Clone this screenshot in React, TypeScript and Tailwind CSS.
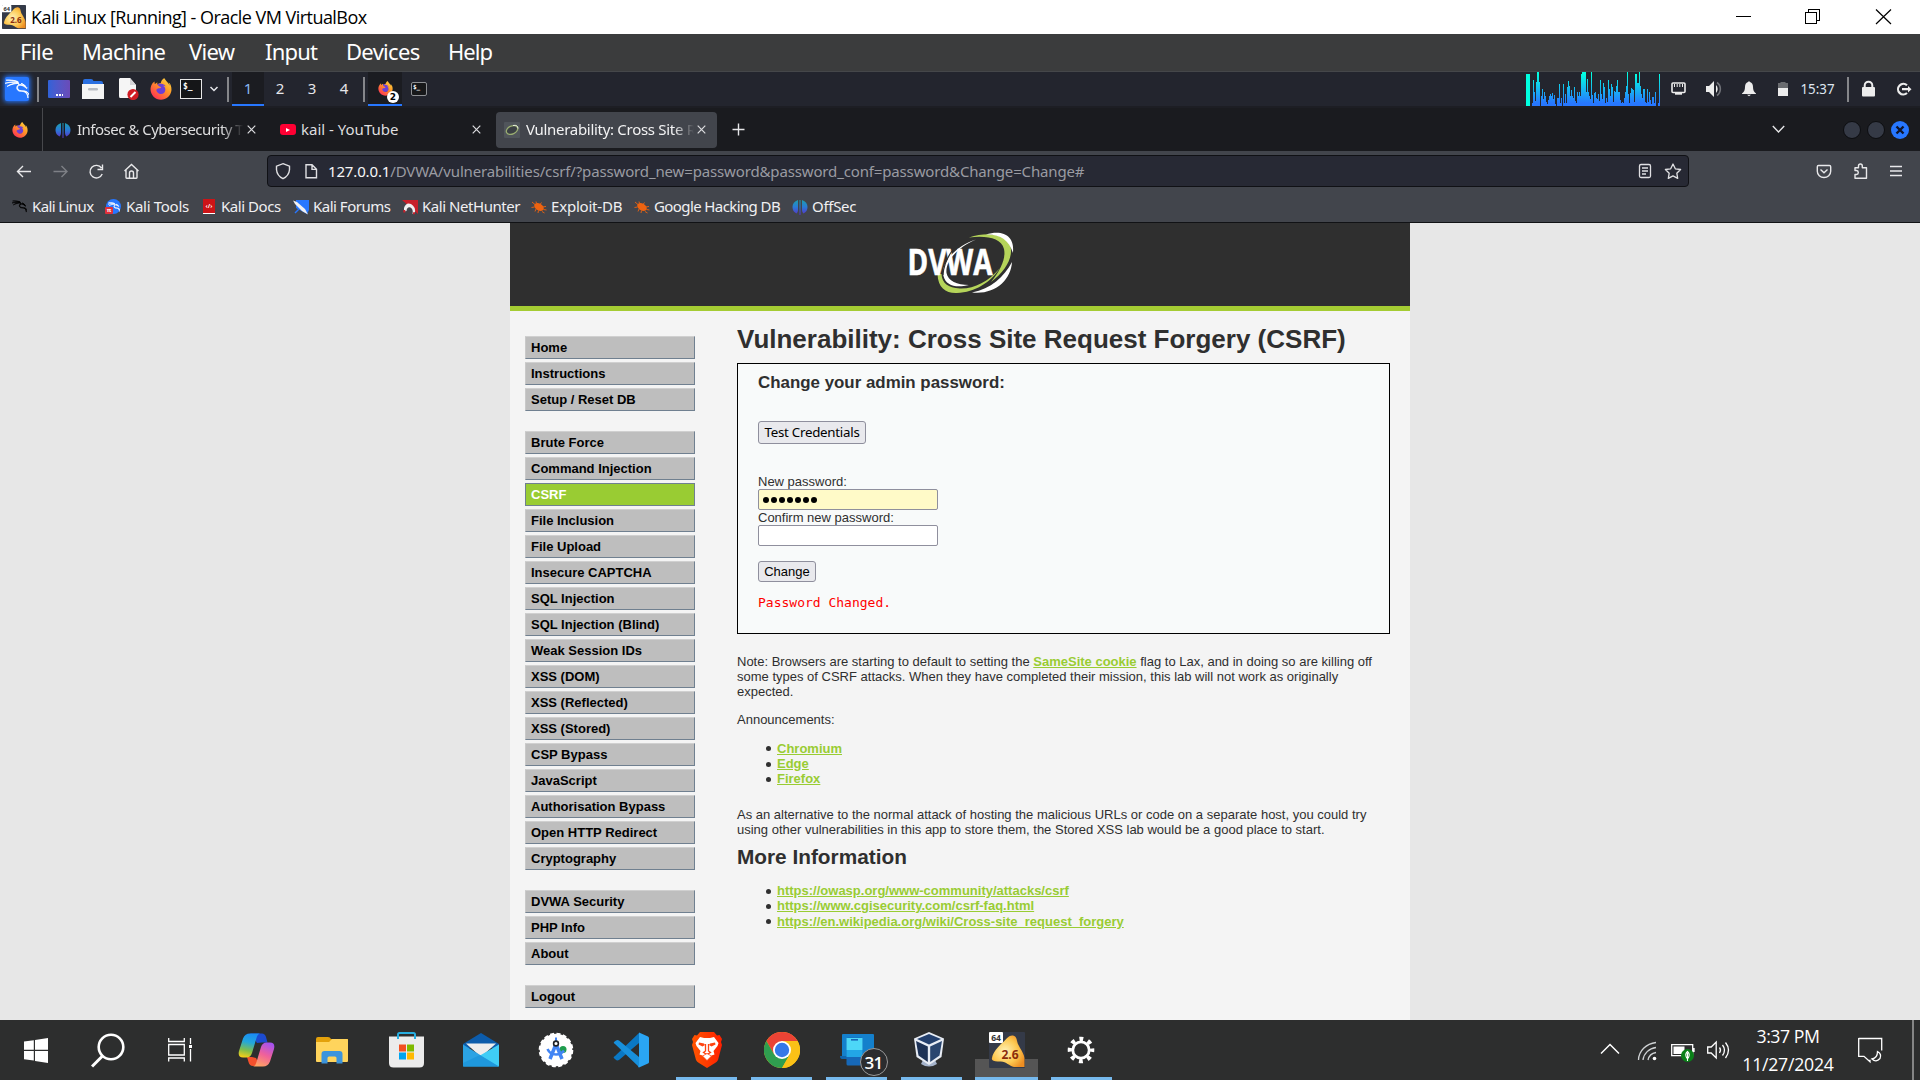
import React from 'react';
import { SiKalilinux } from 'react-icons/si';
import { FaFirefoxBrowser } from 'react-icons/fa';

const CPU = [3,26,14,5,24,34,34,24,0,10,17,7,14,10,4,2,6,10,12,10,13,7,11,2,0,8,8,22,3,8,0,22,3,12,3,19,25,20,10,16,10,8,19,5,3,14,10,14,10,32,34,34,34,34,14,27,14,10,7,34,11,3,13,14,8,7,12,5,26,12,7,23,19,3,8,4,26,17,10,22,19,4,15,14,20,26,14,14,6,3,4,3,8,14,20,34,12,3,13,18,17,16,4,32,32,23,23,34,20,12,8,17,17,4,3,17,4,14,6,2,9,9,3,14,0,0,3,32];

const UI = "font-['Noto_Sans',sans-serif]";
const SEGOE = "font-['Open_Sans','Noto_Sans',sans-serif]";

function Defs() {
  return (
    <svg className="absolute h-0 w-0" aria-hidden="true">
      <defs>
        <linearGradient id="ff" x1="1" y1="0" x2="0.2" y2="1">
          <stop offset="0" stopColor="#ffe14a" />
          <stop offset="0.45" stopColor="#ff9a26" />
          <stop offset="1" stopColor="#ff2d55" />
        </linearGradient>
      </defs>
    </svg>
  );
}

function Firefox({ className }: { className: string }) {
  return (
    <span className={`relative block shrink-0 ${className}`}>
      <span className="absolute inset-[22%] rounded-full bg-[#6b3fd6]" />
      <FaFirefoxBrowser className="relative block h-full w-full" fill="url(#ff)" />
    </span>
  );
}

function VmIcon({ className }: { className: string }) {
  return (
    <svg className={`block shrink-0 ${className}`} viewBox="0 0 36 36">
      <defs>
        <radialGradient id="gold" cx="0.4" cy="0.5" r="0.65">
          <stop offset="0" stopColor="#fff2b8" />
          <stop offset="0.6" stopColor="#fdc850" />
          <stop offset="1" stopColor="#ee8e22" />
        </radialGradient>
      </defs>
      <rect width="36" height="36" rx="1" fill="#343a48" />
      <path d="M3 26C4 20 9 15 13 11C17 8 19 3 24 3.500C29 4.500 27 10 30 14C32 18 36 23 35.500 28V35H25C20 34 17 29 11 29.500C6 30 2 29 3 26Z" fill="url(#gold)" />
      <rect width="14" height="11" rx="1" fill="#fff" />
      <text x="7" y="8.800" fontSize="8.500" fontWeight="700" textAnchor="middle" fill="#333" fontFamily="Open Sans, sans-serif">64</text>
      <text x="21" y="27" fontSize="12" fontWeight="700" textAnchor="middle" fill="#8a2b0c" fontFamily="Open Sans, sans-serif" textLength="17">2.6</text>
    </svg>
  );
}

function TitleBar() {
  return (
    <div className={`flex h-[34px] shrink-0 items-center bg-white pl-[2px] text-black ${SEGOE}`}>
      <VmIcon className="h-6 w-6" />
      <span className="ml-[5px] whitespace-nowrap text-[18px] leading-[34px] tracking-[-0.54px]">Kali Linux [Running] - Oracle VM VirtualBox</span>
      <svg className="ml-auto h-[34px] w-[200px] shrink-0" viewBox="1720 0 200 34" fill="none" stroke="#000" shapeRendering="crispEdges">
        <path d="M1736 16.500h15" />
        <path d="M1805.500 12.500h11v11h-11zM1808.500 12v-2.500h11v11h-3" />
        <path d="M1876 9.500l15 14.500M1891 9.500l-15 14.500" shapeRendering="auto" strokeWidth="1.200" />
      </svg>
    </div>
  );
}

function MenuBar() {
  return (
    <div className={`flex h-[38px] shrink-0 items-center border-b border-[#45474a] bg-[#3b3c3d] pb-[3px] pl-[20px] text-[22px] leading-none text-white ${UI}`}>
      <span className="w-[62px] tracking-[-0.5px]">File</span>
      <span className="w-[107px] tracking-[-0.7px]">Machine</span>
      <span className="w-[76px] tracking-[-0.7px]">View</span>
      <span className="w-[81px] tracking-[-0.8px]">Input</span>
      <span className="w-[102px] tracking-[-0.7px]">Devices</span>
      <span className="tracking-[-1px]">Help</span>
    </div>
  );
}

function PanelSep({ className }: { className: string }) {
  return <span className={`h-[25px] w-[2px] shrink-0 bg-[#85868a] ${className}`} />;
}

function KaliPanel() {
  return (
    <div className={`flex h-[34px] shrink-0 items-center bg-[#23252e] text-[15px] text-[#e6e6ea] ${UI}`}>
      <span className="ml-[5px] flex h-6 w-6 shrink-0 items-center justify-center rounded-[2px] bg-[#2777ff] shadow-[0_0_5px_1px_#2777ff]">
        <SiKalilinux className="h-6 w-6 text-white" stroke="currentColor" strokeWidth={0.8} />
      </span>
      <PanelSep className="ml-[8px]" />
      <span className="ml-[9px] flex h-[18px] w-[22px] shrink-0 items-end justify-center rounded-[1px] bg-gradient-to-r from-[#2f62d8] to-[#6a4bb8] pb-[2px]">
        <span className="h-[2px] w-[7px] bg-[repeating-linear-gradient(90deg,#fff_0_2px,transparent_2px_3px)]" />
      </span>
      <svg className="ml-3 h-[20px] w-[22px] shrink-0" viewBox="0 0 22 20">
        <path d="M1 8V2Q1 0 3 0H9Q11 0 11.500 2H19Q21 2 21 4V8Z" fill="#2a6fe0" />
        <path d="M0 5H22V20H0Z" fill="#f4f4f4" />
        <rect x="6" y="9" width="10" height="2.500" rx="1.200" fill="#b9bcc2" />
      </svg>
      <svg className="ml-[14px] h-[22px] w-[21px] shrink-0" viewBox="0 0 21 22">
        <path d="M2 0H12L18 7V20H2Q1 20 1 18V1Z" fill="#f5f5f5" />
        <path d="M12 0V7H18Z" fill="#d5d5d8" />
        <circle cx="15" cy="16.500" r="5.600" fill="#d01c24" />
        <path d="M12.500 19L17.500 14" stroke="#fff" strokeWidth="2" />
      </svg>
      <Firefox className="ml-[11px] h-[22px] w-[22px]" />
      <span className="ml-[8px] h-[20px] w-[22px] shrink-0 border border-[#e8e8e8] bg-[#151618] pl-[2px] font-['DejaVu_Sans_Mono',monospace] text-[8px] font-bold leading-[14px] text-white">$_</span>
      <svg className="ml-[7px] h-2 w-[10px] shrink-0" viewBox="0 0 10 8" fill="none" stroke="#e6e6ea" strokeWidth="1.500"><path d="M1.500 2l3.500 3.500L8.500 2" /></svg>
      <PanelSep className="ml-[8px]" />
      <span className="ml-[3px] flex h-[34px] w-8 shrink-0 items-center justify-center border-b-2 border-[#2777ff] bg-[#1b1c21] text-[#8ab8ee]">1</span>
      <span className="w-8 shrink-0 pb-[2px] text-center">2</span>
      <span className="w-8 shrink-0 pb-[2px] text-center">3</span>
      <span className="w-8 shrink-0 pb-[2px] text-center">4</span>
      <PanelSep className="ml-[3px]" />
      <span className="relative ml-[3px] flex h-[34px] w-[34px] shrink-0 items-center justify-center border-b-2 border-[#2777ff] bg-[#1b1c21]">
        <Firefox className="h-[15px] w-[15px]" />
        <span className="absolute left-[19px] top-[19px] flex h-[12px] w-[12px] items-center justify-center rounded-full bg-white font-['DejaVu_Sans',sans-serif] text-[9px] font-bold leading-none text-black">2</span>
      </span>
      <span className="ml-[9px] h-[14px] w-[16px] shrink-0 rounded-[2px] border border-[#8d8f93] bg-[#17181a] pl-[1px] font-['DejaVu_Sans_Mono',monospace] text-[6px] font-bold leading-[8px] text-white">$_</span>

      <svg className="ml-auto h-[34px] w-[394px] shrink-0" viewBox="1526 72 394 34">
        <defs>
          <linearGradient id="cpu" gradientUnits="userSpaceOnUse" x1="0" x2="0" y1="74" y2="103">
            <stop offset="0" stopColor="#03ffe1" />
            <stop offset="1" stopColor="#2777ff" />
          </linearGradient>
        </defs>
        <rect x="1526" y="74" width="4" height="32" fill="#00ffe0" />
        <g fill="url(#cpu)" shapeRendering="crispEdges">
          {CPU.map((h, i) => <rect key={i} x={1532 + i} y={106 - h} width="1" height={h} />)}
        </g>
        <g fill="none" stroke="#ececec" strokeWidth="1.600">
          <rect x="1672" y="83" width="13" height="9.500" rx="1" />
          <path d="M1675 93.700h7" strokeWidth="2" />
          <path d="M1674.500 84v3M1677.200 84v3M1679.800 84v3M1682.500 84v3" strokeWidth="1" />
        </g>
        <path d="M1706 86h3l5-5v16l-5-5h-3z" fill="#ececec" />
        <path d="M1716 85a5.500 5.500 0 0 1 0 8z" fill="#ececec" />
        <path d="M1717 82.500a8 8 0 0 1 0 13" fill="none" stroke="#707278" strokeWidth="1.600" />
        <path d="M1742 93.500q3-2 3-6.500q0-4 3-5q1-1.500 2 0q3 1 3 5q0 4.500 3 6.500v.5h-14zM1747 94.800h4l-2 1.500z" fill="#ececec" />
        <path d="M1778 83h2.500v-1h5v1h2.500v5h-10z" fill="#6a6c70" />
        <rect x="1778" y="88" width="10" height="8" fill="#ececec" />
        <text x="1800.500" y="94" fontSize="15" fill="#dfe6f0" fontFamily="Noto Sans, sans-serif" textLength="34" lengthAdjust="spacingAndGlyphs">15:37</text>
        <rect x="1847" y="77" width="2" height="25" fill="#85868a" />
        <rect x="1862" y="87" width="13" height="9.500" rx="1" fill="#ececec" />
        <path d="M1864.700 88v-2.500a3.800 3.800 0 0 1 7.600 0V88" fill="none" stroke="#ececec" strokeWidth="2" />
        <path d="M1907 85.300a5.300 5.300 0 1 0 0 7.700M1902 89.200h8" fill="none" stroke="#ececec" strokeWidth="2.200" />
        <path d="M1908 86l3.500 3.200-3.500 3.200z" fill="#ececec" />
      </svg>
    </div>
  );
}

function CloseX({ className }: { className: string }) {
  return (
    <svg className={`h-[9px] w-[9px] shrink-0 ${className}`} viewBox="0 0 9 9" stroke="#dcdcdf" strokeWidth="1.200"><path d="M.7 .7l7.600 7.600M8.300 .7l-7.600 7.600" /></svg>
  );
}

function OffSec({ className }: { className: string }) {
  return (
    <svg className={`h-4 w-4 shrink-0 ${className}`} viewBox="0 0 16 16">
      <defs>
        <linearGradient id="os" gradientUnits="userSpaceOnUse" x1="0" x2="0" y1="0" y2="16">
          <stop offset="0" stopColor="#1aa3a8" />
          <stop offset="0.5" stopColor="#2a7bd6" />
          <stop offset="1" stopColor="#5a2fc8" />
        </linearGradient>
      </defs>
      <path d="M6 1Q.5 3 .5 8Q.5 12.500 4.500 14.500Q6 13 6 11ZM10 1Q15.500 3 15.500 8Q15.500 12.500 11.500 14.500Q10 13 10 11ZM7.500 1h1v15h-1z" fill="url(#os)" />
    </svg>
  );
}

function TabBar() {
  return (
    <div className={`flex h-[43px] shrink-0 items-center bg-[#1a1b1f] text-[15px] text-[#dededf] ${UI}`}>
      <Firefox className="ml-[12px] h-4 w-4" />
      <span className="ml-[14px] h-full w-px shrink-0 bg-[#47484c]" />
      <OffSec className="ml-[12px]" />
      <span className="ml-[6px] w-[168px] shrink-0 overflow-hidden whitespace-nowrap tracking-[-0.5px] [mask-image:linear-gradient(90deg,#000_86%,transparent_99%)]">Infosec &amp; Cybersecurity Training</span>
      <CloseX className="ml-[2px]" />
      <span className="ml-[24px] flex h-[11px] w-4 shrink-0 items-center justify-center rounded-[3px] bg-[#ff0033]">
        <span className="h-0 w-0 border-y-[2.500px] border-l-[4px] border-y-transparent border-l-white" />
      </span>
      <span className="ml-[5px] w-[171px] shrink-0 whitespace-nowrap">kail - YouTube</span>
      <CloseX className="" />
      <div className="ml-[15px] flex h-[36px] w-[221px] shrink-0 items-center rounded-[4px] bg-[#42454c] pl-2 text-[#f2f2f3]">
        <svg className="h-4 w-4 shrink-0" viewBox="0 0 16 16">
          <rect width="16" height="16" rx="1" fill="#50555b" />
          <ellipse cx="8" cy="8" rx="6" ry="4" transform="rotate(-25 8 8)" fill="#3b4044" stroke="#9aae72" strokeWidth="1.300" />
          <path d="M9 3.500q5-1 5 3" stroke="#e8f0dc" fill="none" />
        </svg>
        <span className="ml-[6px] w-[168px] shrink-0 overflow-hidden whitespace-nowrap tracking-[-0.3px] [mask-image:linear-gradient(90deg,#000_88%,transparent_100%)]">Vulnerability: Cross Site Request</span>
        <CloseX className="ml-[3px]" />
      </div>
      <svg className="ml-[15px] h-[13px] w-[13px] shrink-0" viewBox="0 0 13 13" stroke="#e6e6e8" strokeWidth="1.400"><path d="M6.500 .5v12M.5 6.500h12" /></svg>
      <svg className="ml-auto mr-[50px] h-[9px] w-[13px] shrink-0" viewBox="0 0 13 9" fill="none" stroke="#e6e6e8" strokeWidth="1.400"><path d="M.8 1l5.700 6 5.700-6" /></svg>
      <span className="ml-[8px] h-[18px] w-[18px] shrink-0 rounded-full border border-[#0c0d10] bg-[#353a46]" />
      <span className="ml-[6px] h-[18px] w-[18px] shrink-0 rounded-full border border-[#0c0d10] bg-[#353a46]" />
      <svg className="ml-[6px] mr-[11px] h-[18px] w-[18px] shrink-0" viewBox="0 0 18 18"><circle cx="9" cy="9" r="9" fill="#2777ff" /><path d="M5.500 5.500l7 7M12.500 5.500l-7 7" stroke="#10152a" strokeWidth="2.400" /></svg>
    </div>
  );
}

function NavBar() {
  return (
    <div className={`flex h-[40px] shrink-0 items-center bg-[#42454c] text-[15px] ${UI}`}>
      <svg className="h-[40px] w-[267px] shrink-0" viewBox="0 151 267 40" fill="none" stroke="#e8e8ea" strokeWidth="1.400">
        <path d="M31 171.500H17.500M23 166l-5.500 5.500 5.500 5.500" />
        <path d="M53.500 171.500H67M61.500 166l5.500 5.500-5.500 5.500" stroke="#7e8086" />
        <path d="M101.500 168A6.300 6.300 0 1 0 102.200 174M102.500 164.500v5h-5" />
        <path d="M124.500 171l7-6.500 7 6.500M126 170v7.500q0 .7 .7 .7h9.600q.7 0 .7-.7V170M129.500 178v-5q0-2 2-2t2 2v5" />
      </svg>
      <div className="flex h-[32px] w-[1422px] shrink-0 items-center rounded-[4px] border border-[#101115] bg-[#272934]">
        <svg className="h-[30px] w-[52px] shrink-0" viewBox="268 156 52 30" fill="none" stroke="#e0e0e3" strokeWidth="1.400">
          <path d="M283 163.700l6.500 2.500v3.500q-.5 6-6.500 9-6-3-6.500-9v-3.500z" />
          <path d="M306 164.700h6l4.500 4.500v8.500H306zM312 164.700v4.700h4.500" />
        </svg>
        <span className="ml-[8px] whitespace-nowrap tracking-[-0.145px] text-[#9a9ba2]"><span className="text-[#f6f6f8]">127.0.0.1</span>/DVWA/vulnerabilities/csrf/?password_new=password&amp;password_conf=password&amp;Change=Change#</span>
        <svg className="ml-auto h-[30px] w-[58px] shrink-0" viewBox="1630 156 58 30" fill="none" stroke="#e0e0e3" strokeWidth="1.300">
          <rect x="1639.500" y="164.500" width="11" height="13" rx="1.500" />
          <path d="M1642 168h6M1642 171h6M1642 174h4" />
          <path d="M1673 164l2.300 4.800 5.300.7-3.800 3.700.9 5.200-4.700-2.500-4.700 2.500.9-5.200-3.800-3.700 5.300-.7z" strokeLinejoin="round" />
        </svg>
      </div>
      <svg className="ml-auto h-[40px] w-[110px] shrink-0" viewBox="1810 151 110 40" fill="none" stroke="#e8e8ea" strokeWidth="1.400">
        <path d="M1818.500 165.500h11q1.200 0 1.200 1.200v4.500a6.700 6.300 0 0 1-13.400 0v-4.500q0-1.200 1.200-1.200zM1820.500 169.500l3.500 3.300 3.500-3.300" />
        <path d="M1855 178.300v-3.800h1.500q1.800-.2 1.800-2t-1.800-2H1855v-2.700h3.500v-1.800q0-2 1.900-2t1.900 2v1.800h4.200v10.500z" strokeLinejoin="round" />
        <path d="M1890 166.500h12M1890 171h12M1890 175.500h12" />
      </svg>
    </div>
  );
}

function Beetle() {
  return (
    <svg className="h-4 w-4 shrink-0" viewBox="0 0 16 16">
      <ellipse cx="8" cy="8" rx="5.200" ry="3.400" transform="rotate(30 8 8)" fill="#ee6310" />
      <path d="M4 5.500L1 3M5.500 4.500L5 2.500M9 5.500l1.500-2M11.500 8l3.500-.5M3.500 8L.5 8.500M5 10l-1 2.500M7.500 11.500L7 14M11 12.500l2.500 1.500M12.500 10.500l3 .5" stroke="#ee6310" strokeWidth="0.900" fill="none" />
    </svg>
  );
}

function Bookmarks() {
  return (
    <div className={`flex h-[32px] shrink-0 items-center border-b border-[#111215] bg-[#42454c] text-[15px] text-[#f0f0f2] ${UI}`}>
      <div className="ml-[12px] flex w-[94px] shrink-0 items-center gap-[5px] whitespace-nowrap"><SiKalilinux className="h-[15px] w-[15px] shrink-0 text-black" stroke="currentColor" strokeWidth={1} /><span className="tracking-[-0.6px]">Kali Linux</span></div>
      <div className="flex w-[96px] shrink-0 items-center gap-[5px] whitespace-nowrap">
        <span className="relative h-[15px] w-[15px] shrink-0 rounded-full bg-[#2777ff]"><SiKalilinux className="absolute left-[2px] top-[2px] h-3 w-3 text-white" stroke="currentColor" strokeWidth={1} /><span className="absolute -left-px top-[8px] h-[7px] w-[8px] rounded-[1px] bg-[#e0303a] text-center text-[6px] font-bold leading-[7px] text-white">π</span></span>
        <span className="tracking-[-0.3px]">Kali Tools</span>
      </div>
      <div className="flex w-[91px] shrink-0 items-center gap-[6px] whitespace-nowrap">
        <span className="ml-px flex h-[15px] w-[12px] shrink-0 items-center justify-center border-b border-white bg-[#cc1417] text-[6px] font-bold leading-none text-white">‹/›</span>
        <span className="tracking-[-0.45px]">Kali Docs</span>
      </div>
      <div className="flex w-[109px] shrink-0 items-center gap-[4px] whitespace-nowrap">
        <svg className="h-4 w-4 shrink-0" viewBox="0 0 16 16"><path d="M3 1h13v10l-2 4L3 9z" fill="#2777ff" /><path d="M0 1.500L4 3l8 7 3 5.500L9 12 2 5z" fill="#f0f0f2" /><path d="M2 14l4-4" stroke="#2777ff" strokeWidth="1.500" /></svg>
        <span className="tracking-[-0.5px]">Kali Forums</span>
      </div>
      <div className="flex w-[128px] shrink-0 items-center gap-[4px] whitespace-nowrap">
        <svg className="h-4 w-4 shrink-0" viewBox="0 0 16 16"><path d="M0 1h16v14z" fill="#c7202b" /><path d="M2 9q2-6 7-4 5 3 4 9l-2.500 1q1-5-2-6.500Q5 7.500 4.500 12L2 12.500z" fill="#f0f0f2" /><path d="M2.300 13.500v-2.500M11 14.500l2-.5" stroke="#c7202b" strokeWidth="2" /></svg>
        <span className="tracking-[-0.45px]">Kali NetHunter</span>
      </div>
      <div className="ml-px flex w-[103px] shrink-0 items-center gap-[4px] whitespace-nowrap"><Beetle /><span className="tracking-[-0.2px]">Exploit-DB</span></div>
      <div className="flex w-[158px] shrink-0 items-center gap-[4px] whitespace-nowrap"><Beetle /><span className="tracking-[-0.6px]">Google Hacking DB</span></div>
      <div className="flex shrink-0 items-center gap-[4px] whitespace-nowrap"><OffSec className="" /><span className="tracking-[-0.3px]">OffSec</span></div>
    </div>
  );
}

function DvwaLogo() {
  return (
    <svg className="block h-[75px] w-[125px]" viewBox="0 0 125 75">
      <path d="M76 14.500C58 20 40 37 43.500 51C46 61 56 63 69 60C57 60 48 56 46.500 48C45 35 60 21 76 14.500Z" fill="#fff" />
      <path d="M37.500 49C38 63 46 68.500 57 68C75 67.500 91 57 100 43C88 57 74 64 60 63.500C48 63 42 58 41.500 49Z" fill="#b5d45a" />
      <path d="M69 12.500C87 6.500 105 8.500 110 20C114 31 106 46 91 57C101 45 106 33 104 24C101 13 87 10.500 69 12.500Z" fill="#b5d45a" />
      <path d="M86 9.500C102 4.500 115 10 113 28C109 15 100 9 86 9.500Z" fill="#fff" />
      <path d="M112 37C111 55 95 70 72 67.500C91 64 104 52 112 37Z" fill="#fff" />
      <text x="7.500" y="50" fontSize="35" fontWeight="700" fill="#fff" stroke="#fff" strokeWidth="0.600" fontFamily="Open Sans, sans-serif" textLength="85" lengthAdjust="spacingAndGlyphs">DVWA</text>
      <path d="M52 26C47 33 43.500 40 43 50" fill="none" stroke="#2f2f2f" strokeWidth="1.200" />
    </svg>
  );
}

const NAV: string[][] = [
  ['Home', 'Instructions', 'Setup / Reset DB'],
  ['Brute Force', 'Command Injection', 'CSRF', 'File Inclusion', 'File Upload', 'Insecure CAPTCHA', 'SQL Injection', 'SQL Injection (Blind)', 'Weak Session IDs', 'XSS (DOM)', 'XSS (Reflected)', 'XSS (Stored)', 'CSP Bypass', 'JavaScript', 'Authorisation Bypass', 'Open HTTP Redirect', 'Cryptography'],
  ['DVWA Security', 'PHP Info', 'About'],
  ['Logout'],
];

function Sidebar() {
  return (
    <nav className="mt-[25px] flex w-[170px] shrink-0 flex-col gap-[20px]">
      {NAV.map((group) => (
        <div key={group[0]} className="flex flex-col gap-[3px]">
          {group.map((label) => (
            <a
              key={label}
              className={`flex h-[23px] items-center border px-[5px] text-[13px] font-bold leading-none whitespace-nowrap ${
                label === 'CSRF'
                  ? 'border-[#708090] bg-[#99cc33] text-white'
                  : 'border-b-[#708090] border-r-[#708090] border-l-[#c9c9c9] border-t-[#d0d0d0] bg-[#bebebe] text-black'
              }`}
            >
              {label}
            </a>
          ))}
        </div>
      ))}
    </nav>
  );
}

function Link({ children }: { children: React.ReactNode }) {
  return <a className="font-bold text-[#99cc33] underline">{children}</a>;
}

function Bullets({ items, className }: { items: string[]; className: string }) {
  return (
    <ul className={`pl-[29px] ${className}`}>
      {items.map((t) => (
        <li key={t} className="flex items-center">
          <span className="mr-[6px] mt-px h-[5px] w-[5px] rounded-full bg-[#2f2f2f]" />
          <Link>{t}</Link>
        </li>
      ))}
    </ul>
  );
}

function Page() {
  return (
    <div className="flex h-[797px] shrink-0 justify-center overflow-hidden bg-[#e7e7e7] font-['Liberation_Sans',Arial,sans-serif] text-[13px] leading-[15.300px] text-[#2f2f2f]">
      <div className="flex w-[900px] flex-col bg-[#f4f4f4]">
        <header className="flex h-[88px] shrink-0 justify-center border-b-[5px] border-[#a5cc33] bg-[#2f2f2f] pt-[2px]">
          <div className="ml-[5px]"><DvwaLogo /></div>
        </header>
        <div className="flex pl-[15px]">
          <Sidebar />
          <main className="ml-[42px] w-[653px] shrink-0">
            <h1 className="mt-[13px] h-[39px] whitespace-nowrap text-[26px] font-bold leading-[30px]">Vulnerability: Cross Site Request Forgery (CSRF)</h1>
            <section className="flex h-[271px] flex-col items-start border border-black bg-[#f8fafa] pl-5">
              <h3 className="mt-[8px] h-[49px] text-[16.900px] font-bold leading-[22px]">Change your admin password:</h3>
              <button className={`h-[23px] w-[108px] whitespace-nowrap rounded-[3px] border border-[#8f8f9d] bg-[#e9e9ed] text-[13.300px] leading-none tracking-[-0.25px] text-black ${UI}`}>Test Credentials</button>
              <label className="mt-[30px] h-[15px]">New password:</label>
              <div className="flex h-[21px] w-[180px] items-center gap-[2px] rounded-[2px] border border-[#8f8f9d] bg-[#fffac8] pl-[4px]">
                {[0, 1, 2, 3, 4, 5, 6].map((i) => <span key={i} className="h-[6px] w-[6px] rounded-full bg-black" />)}
              </div>
              <label className="h-[15px]">Confirm new password:</label>
              <div className="h-[21px] w-[180px] rounded-[2px] border border-[#8f8f9d] bg-white" />
              <button className="mt-[15px] h-[21px] w-[58px] rounded-[3px] border border-[#8f8f9d] bg-[#e9e9ed] text-[13px] leading-none text-black">Change</button>
              <pre className="mt-[13px] font-['DejaVu_Sans_Mono',monospace] text-[13px] leading-[15px] text-[#ff0000]">Password Changed.</pre>
            </section>
            <p className="mt-[20px] leading-[15px]">Note: Browsers are starting to default to setting the <Link>SameSite cookie</Link> flag to Lax, and in doing so are killing off some types of CSRF attacks. When they have completed their mission, this lab will not work as originally expected.</p>
            <p className="mt-[13.400px]">Announcements:</p>
            <Bullets className="mt-[13px]" items={['Chromium', 'Edge', 'Firefox']} />
            <p className="mt-[20px]">As an alternative to the normal attack of hosting the malicious URLs or code on a separate host, you could try using other vulnerabilities in this app to store them, the Stored XSS lab would be a good place to start.</p>
            <h2 className="mt-[8px] text-[20.800px] font-bold leading-[24px]">More Information</h2>
            <Bullets className="mt-[14px]" items={['https://owasp.org/www-community/attacks/csrf', 'https://www.cgisecurity.com/csrf-faq.html', 'https://en.wikipedia.org/wiki/Cross-site_request_forgery']} />
          </main>
        </div>
      </div>
    </div>
  );
}

function TaskButton({ children, className }: { children: React.ReactNode; className: string }) {
  return <div className={`flex h-[60px] shrink-0 items-center justify-center ${className}`}>{children}</div>;
}

const RUN = 'border-b-[3px] border-[#76b9ed] pt-[3px]';

function Brave() {
  return (
    <svg className="h-9 w-[30px]" viewBox="0 0 30 36">
      <defs>
        <linearGradient id="brave" x1="0" y1="0" x2="1" y2="0">
          <stop offset="0" stopColor="#ff5500" />
          <stop offset="1" stopColor="#ff2000" />
        </linearGradient>
      </defs>
      <path d="M8 0H22L25 3.500L27.500 3L30 7L29 10L30 13L26 28Q25 30 23 31L15 36L7 31Q5 30 4 28L0 13L1 10L0 7L2.500 3L5 3.500Z" fill="url(#brave)" />
      <path d="M8 5L12 6H18L22 5L26.500 11L25.500 14L21.500 19L22.500 22.500L19.500 23.500L15 28L10.500 23.500L7.500 22.500L8.500 19L4.500 14L3.500 11Z" fill="#fff" />
      <path d="M7 10.500L12 11.500L13 13L10.500 14.500L6.500 12.500ZM23 10.500L18 11.500L17 13L19.500 14.500L23.500 12.500Z" fill="#ff4310" />
      <path d="M13.500 12V19L11.500 20.500L15 22.500L18.500 20.500L16.500 19V12" fill="none" stroke="#ff4310" strokeWidth="1.300" />
      <path d="M10.500 24L15 21.500L19.500 24L15 28.500Z" fill="#fff" stroke="#ff4310" strokeWidth="0.800" />
    </svg>
  );
}

function Taskbar() {
  return (
    <div className={`flex h-[60px] shrink-0 items-center bg-[#2d2e2e] text-white ${SEGOE}`}>
      <TaskButton className="w-[72px]">
        <svg className="h-[25px] w-6" viewBox="0 0 24 25" fill="#fff"><path d="M0 3.600l9.800-1.400v9.600H0zM11 2L24 0v11.800H11zM0 13h9.800v9.600L0 21.200zM11 13h13v12L11 23z" /></svg>
      </TaskButton>
      <TaskButton className="w-[72px]">
        <svg className="h-[35px] w-[34px]" viewBox="0 0 34 35" fill="none" stroke="#fff" strokeWidth="2.600"><circle cx="20" cy="14" r="12.300" /><path d="M11.500 23L1 33.500" strokeWidth="3" /></svg>
      </TaskButton>
      <TaskButton className="w-[72px]">
        <svg className="h-6 w-[25px]" viewBox="0 0 25 24" fill="none" stroke="#fff" strokeWidth="1.300"><path d="M.7 0v3.500h15.600V0M.7 6.500h15.600v10.500H.7zM.7 23.500V20h15.600v3.500M22.500 0v6M22.500 11v12.500" /><rect x="21" y="7" width="3" height="3" fill="#fff" stroke="none" /></svg>
      </TaskButton>
      <TaskButton className="ml-[3px] w-[75px]">
        <svg className="h-[34px] w-[37px]" viewBox="0 0 37 34">
          <defs>
            <linearGradient id="cpa" x1=".5" x2=".3" y1="0" y2="1"><stop offset="0" stopColor="#1b8df2" /><stop offset=".35" stopColor="#22a7dd" /><stop offset=".7" stopColor="#7fbe4c" /><stop offset="1" stopColor="#f5cf19" /></linearGradient>
            <linearGradient id="cpb" x1=".7" x2=".3" y1="0" y2="1"><stop offset="0" stopColor="#a552f0" /><stop offset=".5" stopColor="#f0619a" /><stop offset="1" stopColor="#ffa463" /></linearGradient>
          </defs>
          <path d="M12 .5H24Q27 .5 28 4L29.500 9.500H24L19 10L14 2Z" fill="#1c4bd0" />
          <path d="M9 24H14L18 25L22 33H15Q11.500 33 10.500 29Z" fill="#f4502c" />
          <path d="M12 .5H22Q19.500 1 18.500 5L14 20Q12.500 24.500 8.500 24.500H5Q-.5 24.500 1 18L5 5.500Q7 .5 12 .5Z" fill="url(#cpa)" />
          <path d="M25 33.500H15Q17.500 33 18.500 29L23 14Q24.500 9.500 28.500 9.500H32Q37.500 9.500 36 16L32 28.500Q30 33.500 25 33.500Z" fill="url(#cpb)" />
        </svg>
      </TaskButton>
      <TaskButton className="w-[75px]">
        <svg className="h-[27px] w-8" viewBox="0 0 32 27"><path d="M0 2Q0 0 2 0H12Q14 0 15 2H32V8H0Z" fill="#e3a10b" /><path d="M0 5H13L16 2H31Q32 2 32 3V24Q32 25 31 25H1Q0 25 0 24Z" fill="#ffd45c" /><path d="M5.500 26.500V17Q5.500 14 8.500 14H23.500Q26.500 14 26.500 17V26.500H20.500V21Q20.500 19.500 19 19.500H13Q11.500 19.500 11.500 21V26.500Z" fill="#3c94dc" /></svg>
      </TaskButton>
      <TaskButton className="w-[74px]">
        <svg className="h-9 w-[35px]" viewBox="0 0 35 36"><path d="M0 4.500H35V31Q35 35.500 30.500 35.500H4.500Q0 35.500 0 31Z" fill="#ececec" /><path d="M9 7V2.500Q9 1 10.500 1H24.500Q26 1 26 2.500V7" fill="none" stroke="#27aee0" strokeWidth="2" /><path d="M10 12.500h7v7h-7z" fill="#f25022" /><path d="M18 12.500h7v7h-7z" fill="#7fba00" /><path d="M10 20.500h7v7h-7z" fill="#00a4ef" /><path d="M18 20.500h7v7h-7z" fill="#ffb900" /></svg>
      </TaskButton>
      <TaskButton className="w-[76px]">
        <svg className="h-[34px] w-9" viewBox="0 0 36 34"><path d="M0 11L18 0L36 11V15H0Z" fill="#0c5cab" /><path d="M3 10.500H33L18 24Z" fill="#ededed" /><path d="M0 11.500L36 33.500H1Q0 33.500 0 32.500Z" fill="#2ba3e4" /><path d="M36 11.500V32.500Q36 33.500 35 33.500L17 22.500Z" fill="#3fcdf6" /><path d="M0 33.500V30L17 22L36 33.500Z" fill="#1f98dd" /></svg>
      </TaskButton>
      <TaskButton className="w-[74px]">
        <svg className="h-9 w-9" viewBox="0 0 36 36">
          <circle cx="18" cy="18" r="16.300" fill="#fff" /><circle cx="18" cy="18" r="16.300" fill="none" stroke="#fff" strokeWidth="2" strokeDasharray="4 2.400" />
          <circle cx="25" cy="17.500" r="3.500" fill="#1f9d4d" />
          <path d="M18 12L12 27M18 12L24 27" stroke="#4285f4" strokeWidth="3.500" /><path d="M9.500 17Q12 22.500 18 22.500Q23 22.500 26 18.500" fill="none" stroke="#4285f4" strokeWidth="2.600" />
          <path d="M17 5.500h2v5h-2z" fill="#4285f4" /><circle cx="18" cy="11.500" r="2.400" fill="#fff" stroke="#202124" strokeWidth="1.600" />
        </svg>
      </TaskButton>
      <TaskButton className="w-[76px]">
        <svg className="h-9 w-9" viewBox="0 0 36 36"><path d="M2 24L26 1V11L6 28Q4 29 2.500 27.500L.8 26Q0 25 2 24Z" fill="#0a78c4" /><path d="M2 12Q0 11 1 10L3 8.500Q4.500 7.500 6 8.500L26 25V35Z" fill="#1890dc" /><path d="M26 .5L35 4.500Q36 5 36 6V30Q36 31 35 31.500L26 35.500Q24.500 35 26 33Z" fill="#2aa5f4" /></svg>
      </TaskButton>
      <TaskButton className={`ml-[7px] w-[61px] ${RUN}`}><Brave /></TaskButton>
      <TaskButton className={`ml-[14px] w-[61px] ${RUN}`}>
        <svg className="h-9 w-9" viewBox="0 0 36 36"><circle cx="18" cy="18" r="18" fill="#fbc116" /><path d="M2.410 9A18 18 0 0 1 33.590 9H18L10.200 22.500Z" fill="#ea4335" /><path d="M2.410 9A18 18 0 0 0 18 36L25.800 22.500H10.200Z" fill="#2f9e4f" /><path d="M25.800 22.500L18 36A18 18 0 0 0 33.590 9H18Z" fill="#fbc116" /><circle cx="18" cy="18" r="9" fill="#fff" /><circle cx="18" cy="18" r="7.200" fill="#3478e8" /></svg>
      </TaskButton>
      <TaskButton className={`ml-[14px] w-[61px] ${RUN}`}>
        <span className="relative h-9 w-9">
          <svg className="h-9 w-9" viewBox="0 0 36 36"><rect x="3" y="2" width="32" height="24" rx="1" fill="#1480cc" /><path d="M1 24H30V27H3Q1 27 1 24Z" fill="#0f64ad" /><rect x="7.500" y="5.500" width="16" height="28" rx="1.500" fill="#1668b8" /><path d="M7.500 6h16v12h-16z" fill="#4dd7f7" /><path d="M7.500 18h16v7h-16z" fill="#22a6e6" /><rect x="12" y="7" width="7" height="1.600" fill="#1668b8" /></svg>
          <span className="absolute left-[21px] top-[16px] flex h-[28px] w-[28px] items-center justify-center rounded-full border border-[#9a9a9a] bg-[#2b2c2e] text-[17px] font-semibold leading-none tracking-[-0.8px]">31</span>
        </span>
      </TaskButton>
      <TaskButton className={`ml-[14px] w-[61px] ${RUN}`}>
        <svg className="mr-[5px] h-9 w-[30px]" viewBox="3 0 30 36"><path d="M12 28H24L26 32Q18 37 10 32Z" fill="#a5b4cc" /><path d="M18 0L33 6.500L30.500 25L18 33L5.500 25L3 6.500Z" fill="#e8edf5" /><path d="M18 2L30 7L18 12.500L6 7Z" fill="#23406e" /><path d="M5 9L16.800 14.500V30L7.500 23.500Z" fill="#1d3256" /><path d="M31 9L19.200 14.500V30L28.500 23.500Z" fill="#2a4670" /></svg>
      </TaskButton>
      <TaskButton className={`ml-[13px] w-[63px] bg-[linear-gradient(180deg,transparent_39px,#555_39px)] ${RUN}`}>
        <VmIcon className="h-9 w-9" />
      </TaskButton>
      <TaskButton className={`ml-[13px] w-[61px] pr-[2px] ${RUN}`}>
        <svg className="h-[28px] w-[28px]" viewBox="0 0 28 28" fill="none" stroke="#fff"><circle cx="14" cy="14" r="8.200" strokeWidth="2.800" /><circle cx="14" cy="14" r="11.200" strokeWidth="4.200" strokeDasharray="3.900 4.896" strokeDashoffset="1.950" /></svg>
      </TaskButton>
      <svg className="ml-auto h-[60px] w-[140px] shrink-0" viewBox="1594 1020 140 60" fill="none" stroke="#fff" strokeWidth="1.300">
        <path d="M1601 1053.500l9-9 9 9" strokeWidth="1.500" />
        <path d="M1638.500 1060A20 18 0 0 1 1656 1042.500M1643 1060A15 14 0 0 1 1656 1047.500M1648 1060A10 9.500 0 0 1 1656 1052.500" stroke="#cfd2d4" />
        <circle cx="1654.500" cy="1058.500" r="1.800" fill="#fff" stroke="none" />
        <path d="M1671.700 1044.700h21v11h-21zM1694 1048v4" /><rect x="1673.500" y="1046.500" width="11" height="7.500" fill="#fff" stroke="none" />
        <circle cx="1687.500" cy="1055.500" r="6.500" fill="#0a8018" stroke="none" /><path d="M1687.500 1051.500q3.500 3 0 7.500q-3.500-4.500 0-7.500zM1687.500 1053v8" strokeWidth="1.100" />
        <path d="M1707.700 1047h3.500l5-5v16l-5-5h-3.500z" /><path d="M1719.500 1047.500q2 2.500 0 5.500M1722.500 1045q4 5 0 10.500M1725.500 1042.500q6 7.500 0 15.500" />
      </svg>
      <div className="flex w-[108px] shrink-0 flex-col items-center text-[17.700px] leading-[28px] tracking-[-0.25px]">
        <span className="tracking-[-0.45px]">3:37 PM</span>
        <span className="whitespace-nowrap">11/27/2024</span>
      </div>
      <svg className="ml-[15px] h-[60px] w-[26px] shrink-0" viewBox="1857 1020 26 60" fill="none" stroke="#fff" strokeWidth="1.300"><path d="M1858.700 1038.500h23v12M1858.700 1038v18.300h5.300l6 5.500v-2" /><path d="M1877.500 1051.500q4.500 2.500 2.500 7-4 4.500-8 .5 5.500-1 5.500-7.500z" /></svg>
      <span className="ml-[29px] mr-[6px] h-full w-[2px] shrink-0 bg-[#858585]" />
    </div>
  );
}

export default function App() {
  return (
    <div className="relative flex h-[1080px] w-[1920px] flex-col overflow-hidden bg-[#1a1b1f]">
      <Defs />
      <TitleBar />
      <MenuBar />
      <KaliPanel />
      <div className="h-[2px] shrink-0 bg-[#1d1e24]" />
      <TabBar />
      <NavBar />
      <Bookmarks />
      <Page />
      <Taskbar />
    </div>
  );
}
